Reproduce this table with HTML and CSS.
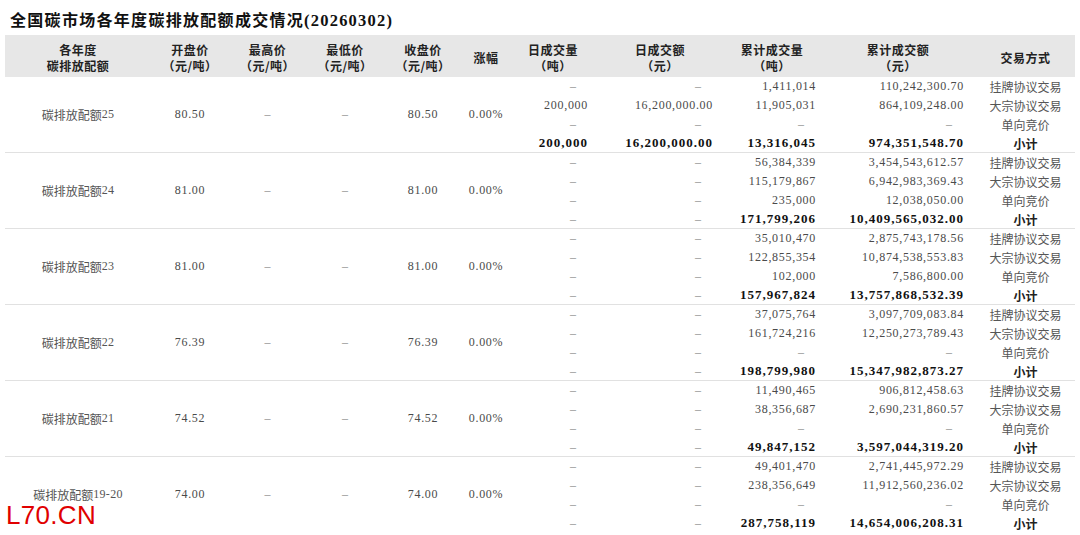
FILE: index.html
```html
<!DOCTYPE html>
<html lang="zh-CN">
<head>
<meta charset="utf-8">
<title>全国碳市场各年度碳排放配额成交情况</title>
<link rel="stylesheet" href="styles.css">
</head>
<body>
<div class="page">
  <h1 class="title">全国碳市场各年度碳排放配额成交情况<span class="tnum">(20260302)</span></h1>
  <div class="head">
    <div class="hc">各年度<br>碳排放配额</div>
    <div class="hc">开盘价<br>（元/吨）</div>
    <div class="hc">最高价<br>（元/吨）</div>
    <div class="hc">最低价<br>（元/吨）</div>
    <div class="hc">收盘价<br>（元/吨）</div>
    <div class="hc">涨幅</div>
    <div class="hc">日成交量<br>（吨）</div>
    <div class="hc">日成交额<br>（元）</div>
    <div class="hc">累计成交量<br>（吨）</div>
    <div class="hc">累计成交额<br>（元）</div>
    <div class="hc">交易方式</div>
  </div>

  <div class="grp">
    <div class="cell span name">碳排放配额<span class="n">25</span></div>
    <div class="cell span n">80.50</div>
    <div class="cell span"><span class="dash">–</span></div>
    <div class="cell span"><span class="dash">–</span></div>
    <div class="cell span n">80.50</div>
    <div class="cell span n">0.00%</div>

    <div class="cell dv"><span class="dash rd">–</span></div>
    <div class="cell da"><span class="dash rd">–</span></div>
    <div class="cell cv n">1,411,014</div>
    <div class="cell ca n">110,242,300.70</div>
    <div class="cell tm">挂牌协议交易</div>

    <div class="cell dv n">200,000</div>
    <div class="cell da n">16,200,000.00</div>
    <div class="cell cv n">11,905,031</div>
    <div class="cell ca n">864,109,248.00</div>
    <div class="cell tm">大宗协议交易</div>

    <div class="cell dv"><span class="dash rd">–</span></div>
    <div class="cell da"><span class="dash rd">–</span></div>
    <div class="cell cv"><span class="dash rd">–</span></div>
    <div class="cell ca"><span class="dash rd">–</span></div>
    <div class="cell tm">单向竞价</div>

    <div class="cell dv n b">200,000</div>
    <div class="cell da n b">16,200,000.00</div>
    <div class="cell cv n b">13,316,045</div>
    <div class="cell ca n b">974,351,548.70</div>
    <div class="cell tm b">小计</div>
  </div>

  <div class="grp">
    <div class="cell span name">碳排放配额<span class="n">24</span></div>
    <div class="cell span n">81.00</div>
    <div class="cell span"><span class="dash">–</span></div>
    <div class="cell span"><span class="dash">–</span></div>
    <div class="cell span n">81.00</div>
    <div class="cell span n">0.00%</div>

    <div class="cell dv"><span class="dash rd">–</span></div>
    <div class="cell da"><span class="dash rd">–</span></div>
    <div class="cell cv n">56,384,339</div>
    <div class="cell ca n">3,454,543,612.57</div>
    <div class="cell tm">挂牌协议交易</div>

    <div class="cell dv"><span class="dash rd">–</span></div>
    <div class="cell da"><span class="dash rd">–</span></div>
    <div class="cell cv n">115,179,867</div>
    <div class="cell ca n">6,942,983,369.43</div>
    <div class="cell tm">大宗协议交易</div>

    <div class="cell dv"><span class="dash rd">–</span></div>
    <div class="cell da"><span class="dash rd">–</span></div>
    <div class="cell cv n">235,000</div>
    <div class="cell ca n">12,038,050.00</div>
    <div class="cell tm">单向竞价</div>

    <div class="cell dv"><span class="dash rd">–</span></div>
    <div class="cell da"><span class="dash rd">–</span></div>
    <div class="cell cv n b">171,799,206</div>
    <div class="cell ca n b">10,409,565,032.00</div>
    <div class="cell tm b">小计</div>
  </div>

  <div class="grp">
    <div class="cell span name">碳排放配额<span class="n">23</span></div>
    <div class="cell span n">81.00</div>
    <div class="cell span"><span class="dash">–</span></div>
    <div class="cell span"><span class="dash">–</span></div>
    <div class="cell span n">81.00</div>
    <div class="cell span n">0.00%</div>

    <div class="cell dv"><span class="dash rd">–</span></div>
    <div class="cell da"><span class="dash rd">–</span></div>
    <div class="cell cv n">35,010,470</div>
    <div class="cell ca n">2,875,743,178.56</div>
    <div class="cell tm">挂牌协议交易</div>

    <div class="cell dv"><span class="dash rd">–</span></div>
    <div class="cell da"><span class="dash rd">–</span></div>
    <div class="cell cv n">122,855,354</div>
    <div class="cell ca n">10,874,538,553.83</div>
    <div class="cell tm">大宗协议交易</div>

    <div class="cell dv"><span class="dash rd">–</span></div>
    <div class="cell da"><span class="dash rd">–</span></div>
    <div class="cell cv n">102,000</div>
    <div class="cell ca n">7,586,800.00</div>
    <div class="cell tm">单向竞价</div>

    <div class="cell dv"><span class="dash rd">–</span></div>
    <div class="cell da"><span class="dash rd">–</span></div>
    <div class="cell cv n b">157,967,824</div>
    <div class="cell ca n b">13,757,868,532.39</div>
    <div class="cell tm b">小计</div>
  </div>

  <div class="grp">
    <div class="cell span name">碳排放配额<span class="n">22</span></div>
    <div class="cell span n">76.39</div>
    <div class="cell span"><span class="dash">–</span></div>
    <div class="cell span"><span class="dash">–</span></div>
    <div class="cell span n">76.39</div>
    <div class="cell span n">0.00%</div>

    <div class="cell dv"><span class="dash rd">–</span></div>
    <div class="cell da"><span class="dash rd">–</span></div>
    <div class="cell cv n">37,075,764</div>
    <div class="cell ca n">3,097,709,083.84</div>
    <div class="cell tm">挂牌协议交易</div>

    <div class="cell dv"><span class="dash rd">–</span></div>
    <div class="cell da"><span class="dash rd">–</span></div>
    <div class="cell cv n">161,724,216</div>
    <div class="cell ca n">12,250,273,789.43</div>
    <div class="cell tm">大宗协议交易</div>

    <div class="cell dv"><span class="dash rd">–</span></div>
    <div class="cell da"><span class="dash rd">–</span></div>
    <div class="cell cv"><span class="dash rd">–</span></div>
    <div class="cell ca"><span class="dash rd">–</span></div>
    <div class="cell tm">单向竞价</div>

    <div class="cell dv"><span class="dash rd">–</span></div>
    <div class="cell da"><span class="dash rd">–</span></div>
    <div class="cell cv n b">198,799,980</div>
    <div class="cell ca n b">15,347,982,873.27</div>
    <div class="cell tm b">小计</div>
  </div>

  <div class="grp">
    <div class="cell span name">碳排放配额<span class="n">21</span></div>
    <div class="cell span n">74.52</div>
    <div class="cell span"><span class="dash">–</span></div>
    <div class="cell span"><span class="dash">–</span></div>
    <div class="cell span n">74.52</div>
    <div class="cell span n">0.00%</div>

    <div class="cell dv"><span class="dash rd">–</span></div>
    <div class="cell da"><span class="dash rd">–</span></div>
    <div class="cell cv n">11,490,465</div>
    <div class="cell ca n">906,812,458.63</div>
    <div class="cell tm">挂牌协议交易</div>

    <div class="cell dv"><span class="dash rd">–</span></div>
    <div class="cell da"><span class="dash rd">–</span></div>
    <div class="cell cv n">38,356,687</div>
    <div class="cell ca n">2,690,231,860.57</div>
    <div class="cell tm">大宗协议交易</div>

    <div class="cell dv"><span class="dash rd">–</span></div>
    <div class="cell da"><span class="dash rd">–</span></div>
    <div class="cell cv"><span class="dash rd">–</span></div>
    <div class="cell ca"><span class="dash rd">–</span></div>
    <div class="cell tm">单向竞价</div>

    <div class="cell dv"><span class="dash rd">–</span></div>
    <div class="cell da"><span class="dash rd">–</span></div>
    <div class="cell cv n b">49,847,152</div>
    <div class="cell ca n b">3,597,044,319.20</div>
    <div class="cell tm b">小计</div>
  </div>

  <div class="grp last">
    <div class="cell span name">碳排放配额<span class="n">19-20</span></div>
    <div class="cell span n">74.00</div>
    <div class="cell span"><span class="dash">–</span></div>
    <div class="cell span"><span class="dash">–</span></div>
    <div class="cell span n">74.00</div>
    <div class="cell span n">0.00%</div>

    <div class="cell dv"><span class="dash rd">–</span></div>
    <div class="cell da"><span class="dash rd">–</span></div>
    <div class="cell cv n">49,401,470</div>
    <div class="cell ca n">2,741,445,972.29</div>
    <div class="cell tm">挂牌协议交易</div>

    <div class="cell dv"><span class="dash rd">–</span></div>
    <div class="cell da"><span class="dash rd">–</span></div>
    <div class="cell cv n">238,356,649</div>
    <div class="cell ca n">11,912,560,236.02</div>
    <div class="cell tm">大宗协议交易</div>

    <div class="cell dv"><span class="dash rd">–</span></div>
    <div class="cell da"><span class="dash rd">–</span></div>
    <div class="cell cv"><span class="dash rd">–</span></div>
    <div class="cell ca"><span class="dash rd">–</span></div>
    <div class="cell tm">单向竞价</div>

    <div class="cell dv"><span class="dash rd">–</span></div>
    <div class="cell da"><span class="dash rd">–</span></div>
    <div class="cell cv n b">287,758,119</div>
    <div class="cell ca n b">14,654,006,208.31</div>
    <div class="cell tm b">小计</div>
  </div>

  <div class="watermark">L70.CN</div>
</div>
</body>
</html>
```
FILE: styles.css
```css
* { box-sizing: border-box; }
html, body { margin: 0; padding: 0; background: #fff; }
body {
  font-family: "Liberation Serif", "Noto Sans CJK SC", serif;
  color: #444;
  width: 1080px;
  height: 535px;
  overflow: hidden;
}
.page {
  position: relative;
  padding: 0 5px;
}
.title {
  margin: 0;
  padding: 6px 0 0 10px;
  margin-left: -5px;
  height: 35px;
  line-height: 29px;
  font-size: 16px;
  font-weight: bold;
  letter-spacing: 1.3px;
  color: #111;
  white-space: nowrap;
}
.tnum { font-family: "Liberation Serif", serif; font-size: 16.5px; letter-spacing: 1.2px; }

.head, .grp {
  display: grid;
  grid-template-columns: 146px 78px 77px 78px 78px 48px 86px 128px 96px 156px 99px;
}
.head {
  height: 42px;
  background: #e7e7e7;
}
.hc {
  display: flex;
  align-items: center;
  justify-content: center;
  text-align: center;
  padding-top: 3px;
  font-size: 12px;
  line-height: 16px;
  font-weight: bold;
  letter-spacing: 0.5px;
  color: #222;
  font-family: "Noto Sans CJK SC", sans-serif;
}

.grp {
  grid-template-rows: 19px 19px 19px 18px;
  border-bottom: 1px solid #e1e1e1;
}
.grp.last { border-bottom: none; }
.cell {
  display: flex;
  align-items: center;
  justify-content: center;
  font-size: 12px;
  white-space: nowrap;
  color: #4a4a4a;
}
.span { grid-row: span 4; }
.name { color: #555; }
.n { font-family: "Liberation Serif", serif; letter-spacing: 0.7px; }
.name .n { letter-spacing: 0.3px; }
.dv, .da, .cv, .ca { justify-content: flex-end; }
.dv { padding-right: 8px; }
.da { padding-right: 11px; }
.cv { padding-right: 4px; }
.ca { padding-right: 12px; }
.tm { font-family: "Noto Sans CJK SC", sans-serif; color: #555; }
.b { font-weight: bold; color: #111; font-size: 13px; letter-spacing: 1px; }
.tm.b { font-size: 12px; letter-spacing: 0; color: #222; }
.dash {
  font-family: "Liberation Serif", serif;
  color: #8c8c8c;
  font-size: 12px;
}
.rd { margin-right: 12px; }

.watermark {
  position: absolute;
  left: 6px;
  top: 501px;
  font-family: "Liberation Sans", Arial, sans-serif;
  font-size: 26px;
  line-height: 28px;
  color: #e00000;
  letter-spacing: 0.3px;
}
```
